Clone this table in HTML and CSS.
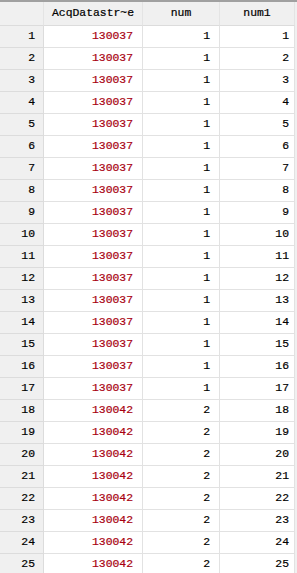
FILE: index.html
```html
<!DOCTYPE html>
<html>
<head>
<meta charset="utf-8">
<link rel="stylesheet" href="styles.css">
</head>
<body>
<div class="browser">
  <div class="grid">
    <div class="cell hd corner"></div>
    <div class="cell hd">AcqDatastr~e</div>
    <div class="cell hd">num</div>
    <div class="cell hd">num1</div>

    <div class="cell rn">1</div><div class="cell s">130037</div><div class="cell n">1</div><div class="cell n last">1</div>
    <div class="cell rn">2</div><div class="cell s">130037</div><div class="cell n">1</div><div class="cell n last">2</div>
    <div class="cell rn">3</div><div class="cell s">130037</div><div class="cell n">1</div><div class="cell n last">3</div>
    <div class="cell rn">4</div><div class="cell s">130037</div><div class="cell n">1</div><div class="cell n last">4</div>
    <div class="cell rn">5</div><div class="cell s">130037</div><div class="cell n">1</div><div class="cell n last">5</div>
    <div class="cell rn">6</div><div class="cell s">130037</div><div class="cell n">1</div><div class="cell n last">6</div>
    <div class="cell rn">7</div><div class="cell s">130037</div><div class="cell n">1</div><div class="cell n last">7</div>
    <div class="cell rn">8</div><div class="cell s">130037</div><div class="cell n">1</div><div class="cell n last">8</div>
    <div class="cell rn">9</div><div class="cell s">130037</div><div class="cell n">1</div><div class="cell n last">9</div>
    <div class="cell rn">10</div><div class="cell s">130037</div><div class="cell n">1</div><div class="cell n last">10</div>
    <div class="cell rn">11</div><div class="cell s">130037</div><div class="cell n">1</div><div class="cell n last">11</div>
    <div class="cell rn">12</div><div class="cell s">130037</div><div class="cell n">1</div><div class="cell n last">12</div>
    <div class="cell rn">13</div><div class="cell s">130037</div><div class="cell n">1</div><div class="cell n last">13</div>
    <div class="cell rn">14</div><div class="cell s">130037</div><div class="cell n">1</div><div class="cell n last">14</div>
    <div class="cell rn">15</div><div class="cell s">130037</div><div class="cell n">1</div><div class="cell n last">15</div>
    <div class="cell rn">16</div><div class="cell s">130037</div><div class="cell n">1</div><div class="cell n last">16</div>
    <div class="cell rn">17</div><div class="cell s">130037</div><div class="cell n">1</div><div class="cell n last">17</div>
    <div class="cell rn">18</div><div class="cell s">130042</div><div class="cell n">2</div><div class="cell n last">18</div>
    <div class="cell rn">19</div><div class="cell s">130042</div><div class="cell n">2</div><div class="cell n last">19</div>
    <div class="cell rn">20</div><div class="cell s">130042</div><div class="cell n">2</div><div class="cell n last">20</div>
    <div class="cell rn">21</div><div class="cell s">130042</div><div class="cell n">2</div><div class="cell n last">21</div>
    <div class="cell rn">22</div><div class="cell s">130042</div><div class="cell n">2</div><div class="cell n last">22</div>
    <div class="cell rn">23</div><div class="cell s">130042</div><div class="cell n">2</div><div class="cell n last">23</div>
    <div class="cell rn">24</div><div class="cell s">130042</div><div class="cell n">2</div><div class="cell n last">24</div>
    <div class="cell rn">25</div><div class="cell s">130042</div><div class="cell n">2</div><div class="cell n last">25</div>
  </div>
</div>
</body>
</html>
```
FILE: styles.css
```css
html, body {
  margin: 0;
  padding: 0;
  background: #f0f0f0;
}
.browser {
  border-top: 2px solid #a0a0a0;
  background: #f0f0f0;
  height: 571px;
  overflow: hidden;
  font-family: "Liberation Mono", "Courier New", monospace;
  font-size: 11.4px;
  color: #000;
}
.grid {
  display: grid;
  grid-template-columns: 44px 99px 77px 75px;
  grid-template-rows: 24px;
  grid-auto-rows: 22px;
  background: #fff;
  width: 295px;
}
.cell {
  box-sizing: border-box;
  border-right: 1px solid #e2e2e2;
  border-bottom: 1px solid #e2e2e2;
  display: flex;
  align-items: center;
  justify-content: flex-end;
  padding-right: 9px;
  white-space: nowrap;
  line-height: 1;
  -webkit-text-stroke: 0.2px currentColor;
}
.hd {
  height: 24px;
  background: #f0f0f0;
  justify-content: center;
  padding-right: 0;
  border-right-color: #e4e4e4;
  border-bottom-color: #dcdcdc;
}
.rn {
  background: #f0f0f0;
  padding-right: 8px;
  border-right-color: #dcdcdc;
  border-bottom-color: #dcdcdc;
}
.s {
  color: #a80010;
}
.last {
  padding-right: 5px;
}
```
